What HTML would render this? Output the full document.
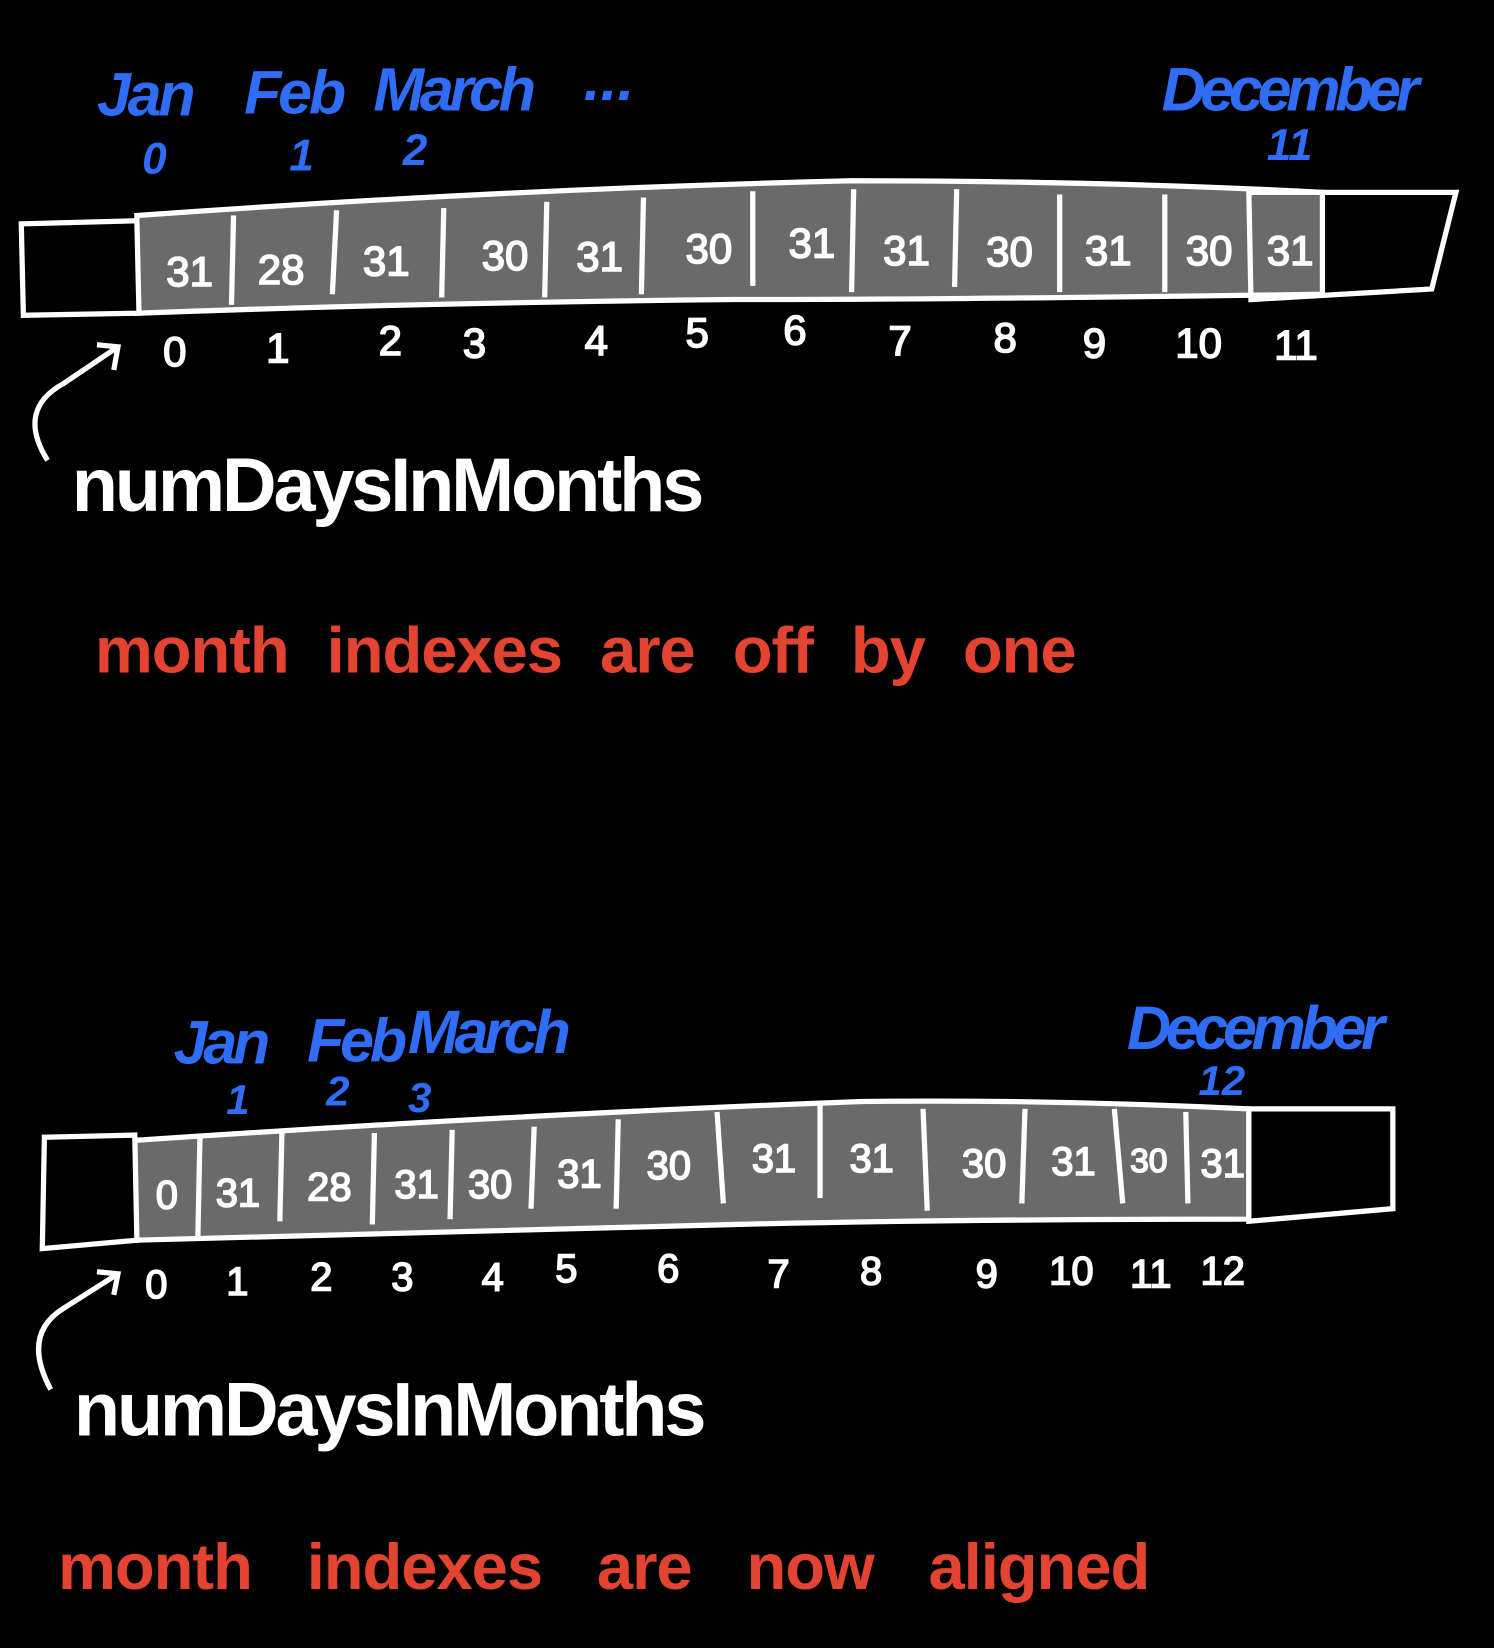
<!DOCTYPE html>
<html><head><meta charset="utf-8"><style>
html,body{margin:0;padding:0;background:#000;}
svg{display:block}
text{font-family:"Liberation Sans",sans-serif;}
</style></head><body>
<svg width="1494" height="1648" viewBox="0 0 1421 1568" xmlns="http://www.w3.org/2000/svg">
<rect width="1421" height="1568" fill="#000"/>
<!-- TOP -->
<g fill="#2f6df6" font-size="58" font-style="italic" font-weight="bold">
<text x="92" y="110" letter-spacing="-3">Jan</text>
<text x="232" y="108" letter-spacing="-3">Feb</text>
<text x="355" y="105" letter-spacing="-4">March</text>
<text x="555" y="95">...</text>
<text x="1105" y="105" letter-spacing="-5">December</text>
<text x="135" y="165" font-size="42">0</text>
<text x="275" y="162" font-size="42">1</text>
<text x="383" y="157" font-size="42">2</text>
<text x="1205" y="152" font-size="42">11</text>
</g>
<path d="M130 205 Q480 180 810 172 Q1050 172 1258 183 L1258 280 Q900 285 700 285 Q400 288 130 298 Z" fill="#6a6a6a" stroke="#fff" stroke-width="5"/>
<path d="M20 213 L130 210 L132 298 L22 300 Z" fill="#000" stroke="#fff" stroke-width="5"/>
<path d="M1188 183 L1385 183 L1362 275 L1190 285 Z" fill="none" stroke="#fff" stroke-width="5"/>
<g stroke="#fff" stroke-width="5" fill="none">
<path d="M222 205 L220 290"/><path d="M320 200 L316 280"/><path d="M422 198 L420 283"/><path d="M520 192 L518 283"/><path d="M612 188 L610 280"/><path d="M716 182 L716 272"/><path d="M812 180 L810 278"/><path d="M910 180 L908 273"/><path d="M1008 185 L1008 278"/><path d="M1108 185 L1108 278"/>
</g>
<g fill="#fff" font-size="40" stroke="#fff" stroke-width="1.5">
<text x="158" y="272">31</text><text x="245" y="270">28</text><text x="345" y="262">31</text><text x="458" y="257">30</text><text x="548" y="258">31</text><text x="652" y="250">30</text><text x="750" y="245">31</text><text x="840" y="252">31</text><text x="938" y="253">30</text><text x="1032" y="252">31</text><text x="1128" y="252">30</text><text x="1205" y="252">31</text>
</g>
<g fill="#fff" font-size="40" stroke="#fff" stroke-width="1.5">
<text x="155" y="348">0</text><text x="253" y="345">1</text><text x="360" y="338">2</text><text x="440" y="340">3</text><text x="556" y="338">4</text><text x="652" y="330">5</text><text x="745" y="328">6</text><text x="845" y="338">7</text><text x="945" y="335">8</text><text x="1030" y="340">9</text><text x="1118" y="340">10</text><text x="1212" y="342">11</text>
</g>
<path d="M45 438 Q15 390 60 365 L112 330 M92 328 L112 330 L108 352" stroke="#fff" stroke-width="5" fill="none"/>
<text x="68" y="486" fill="#fff" font-size="72" font-weight="bold" letter-spacing="-3">numDaysInMonths</text>
<text x="90" y="640" fill="#e34331" font-size="62" font-weight="bold" letter-spacing="-1" word-spacing="20">month indexes are off by one</text>
<!-- BOTTOM -->
<g fill="#2f6df6" font-size="58" font-style="italic" font-weight="bold">
<text x="165" y="1012" letter-spacing="-4">Jan</text>
<text x="292" y="1010" letter-spacing="-4">Feb</text>
<text x="388" y="1002" letter-spacing="-4">March</text>
<text x="1072" y="998" letter-spacing="-5">December</text>
<text x="215" y="1060" font-size="40">1</text>
<text x="310" y="1052" font-size="40">2</text>
<text x="388" y="1058" font-size="40">3</text>
<text x="1140" y="1042" font-size="40">12</text>
</g>
<path d="M128 1085 Q500 1060 820 1048 Q1000 1046 1188 1055 L1188 1160 Q900 1160 700 1165 Q400 1172 128 1180 Z" fill="#6a6a6a" stroke="#fff" stroke-width="5"/>
<path d="M42 1082 L128 1080 L130 1180 L40 1188 Z" fill="#000" stroke="#fff" stroke-width="5"/>
<path d="M1188 1055 L1325 1055 L1325 1150 L1188 1162 Z" fill="#000" stroke="#fff" stroke-width="5"/>
<g stroke="#fff" stroke-width="5" fill="none">
<path d="M190 1082 L188 1178"/><path d="M268 1078 L266 1162"/><path d="M356 1078 L354 1165"/><path d="M430 1075 L428 1160"/><path d="M508 1072 L505 1150"/><path d="M588 1065 L586 1150"/><path d="M682 1058 L688 1145"/><path d="M780 1050 L780 1140"/><path d="M878 1055 L882 1152"/><path d="M975 1055 L972 1145"/><path d="M1060 1055 L1068 1145"/><path d="M1128 1058 L1130 1145"/>
</g>
<g fill="#fff" font-size="38" stroke="#fff" stroke-width="1.5">
<text x="148" y="1150">0</text><text x="205" y="1148">31</text><text x="292" y="1142">28</text><text x="375" y="1140">31</text><text x="445" y="1140">30</text><text x="530" y="1130">31</text><text x="615" y="1122">30</text><text x="715" y="1115">31</text><text x="808" y="1115">31</text><text x="915" y="1120">30</text><text x="1000" y="1118">31</text><text x="1075" y="1115" font-size="32">30</text><text x="1142" y="1120">31</text>
</g>
<g fill="#fff" font-size="38" stroke="#fff" stroke-width="1.5">
<text x="138" y="1235">0</text><text x="215" y="1232">1</text><text x="295" y="1228">2</text><text x="372" y="1228">3</text><text x="458" y="1228">4</text><text x="528" y="1220">5</text><text x="625" y="1220">6</text><text x="730" y="1225">7</text><text x="818" y="1222">8</text><text x="928" y="1225">9</text><text x="998" y="1222">10</text><text x="1075" y="1225">11</text><text x="1142" y="1222">12</text>
</g>
<path d="M48 1322 Q20 1270 60 1245 L112 1212 M92 1210 L112 1212 L108 1232" stroke="#fff" stroke-width="5" fill="none"/>
<text x="70" y="1366" fill="#fff" font-size="72" font-weight="bold" letter-spacing="-3">numDaysInMonths</text>
<text x="55" y="1512" fill="#e34331" font-size="62" font-weight="bold" letter-spacing="-1" word-spacing="36">month indexes are now aligned</text>
</svg>
</body></html>
